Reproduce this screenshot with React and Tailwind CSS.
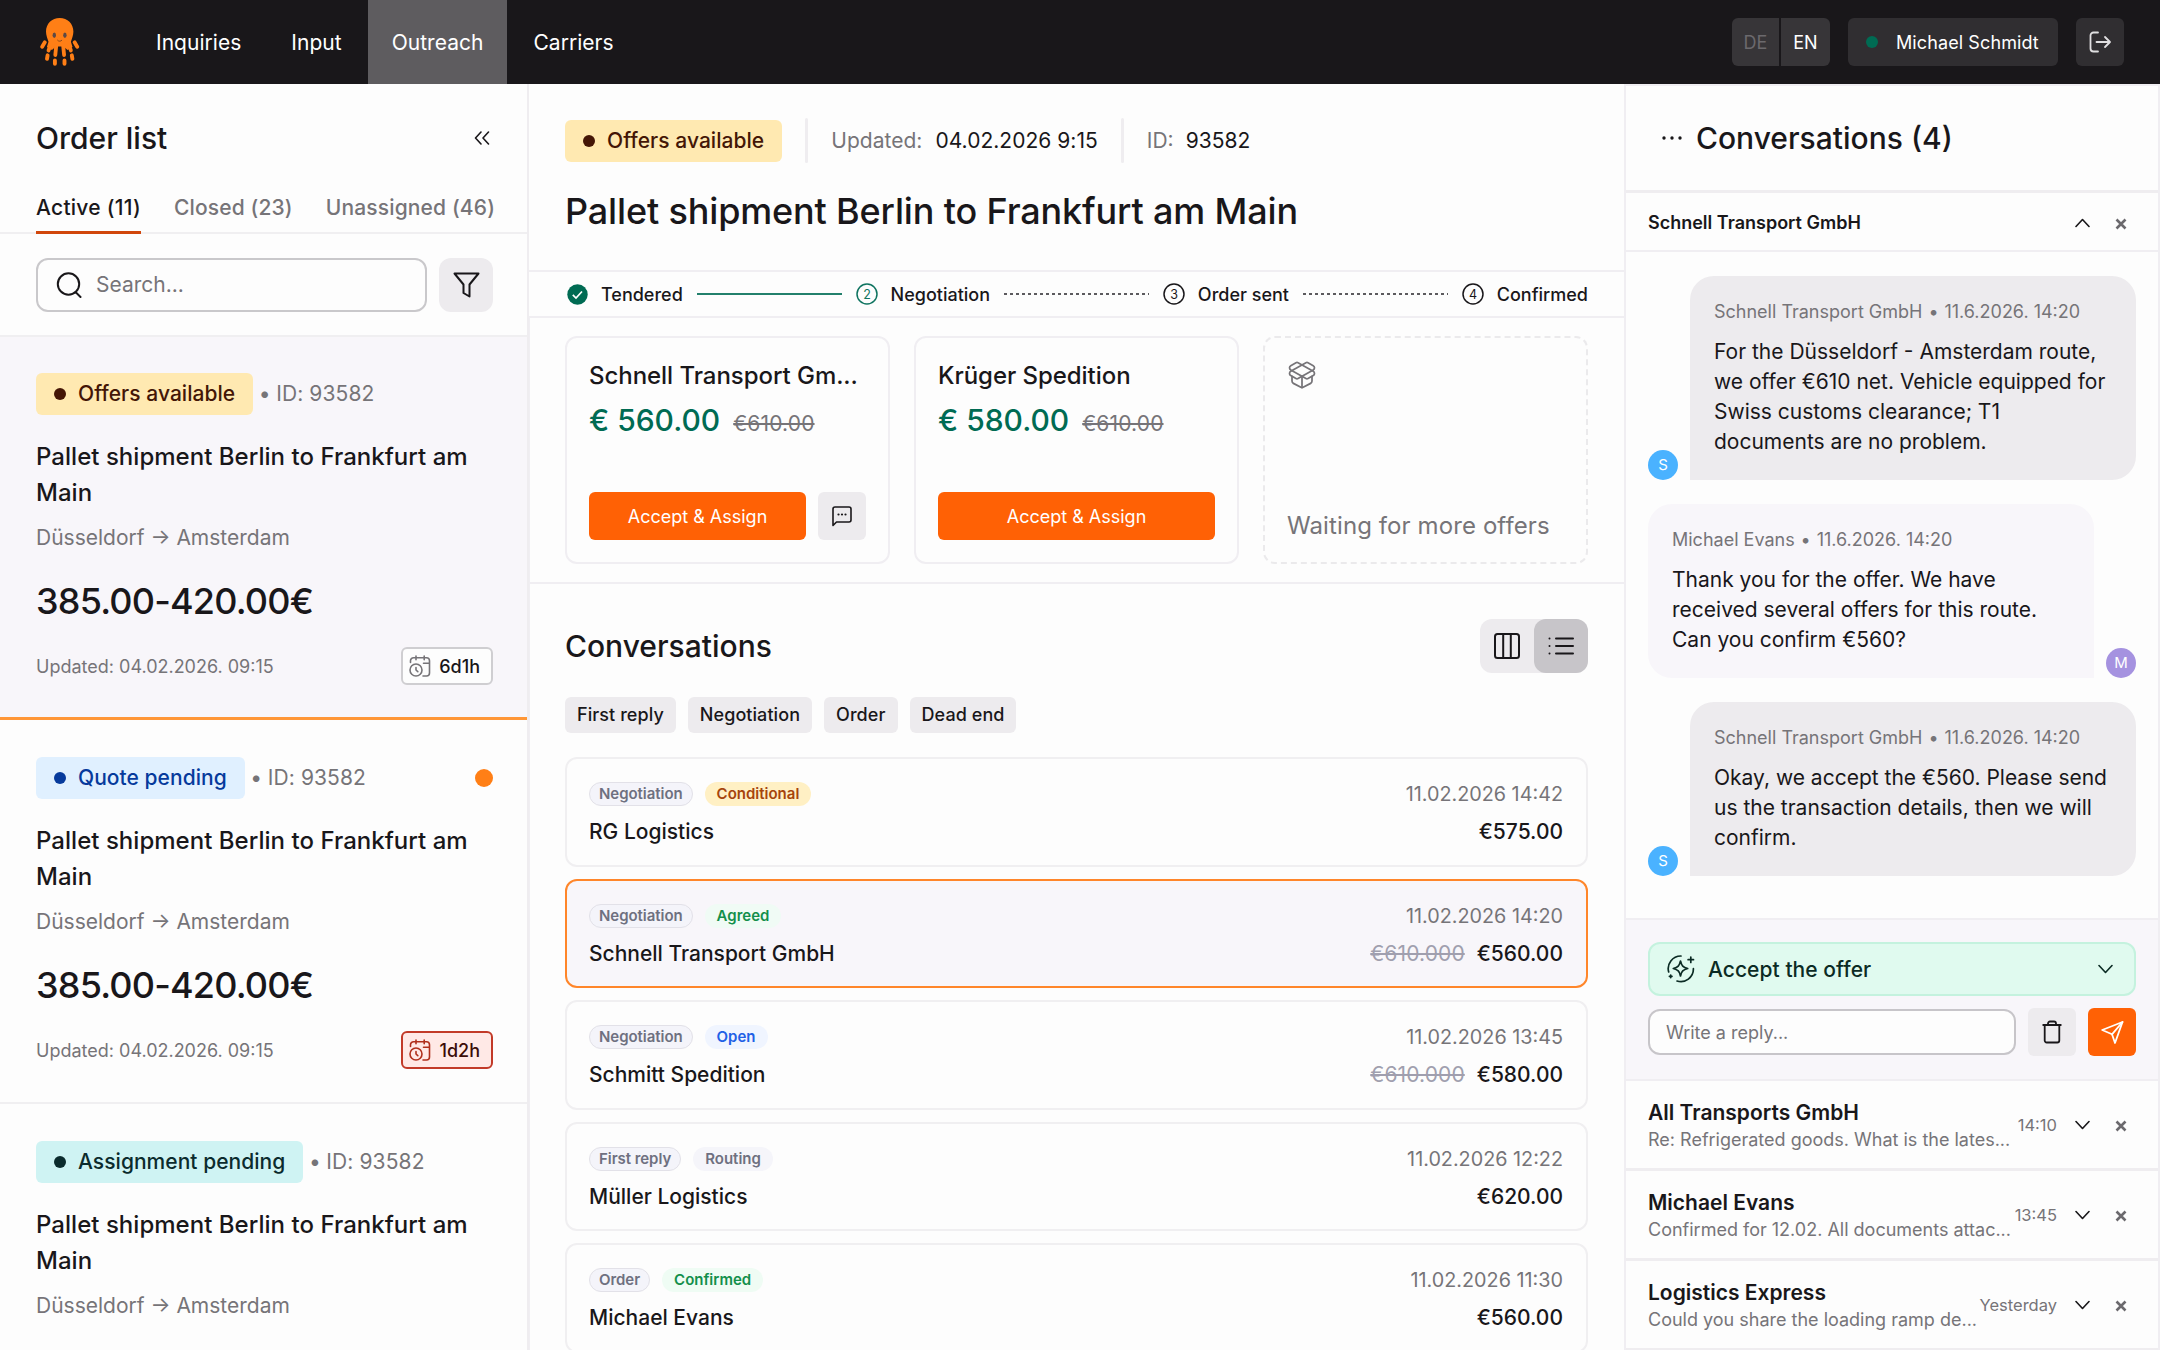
const NAV = ["Inquiries", "Input", "Outreach", "Carriers"];

const STATUS_COLORS = {
  offers:     "bg-[#ffe9b1] text-[#441606]",
  quote:      "bg-[#e0f0ff] text-[#063a9c]",
  assignment: "bg-[#cff3f3] text-[#0b2b2d]",
};

const DOT_COLORS = {
  offers:     "bg-[#441606]",
  quote:      "bg-[#063a9c]",
  assignment: "bg-[#0b2b2d]",
};

const ORDERS = [
  { id: 1, status: "offers", label: "Offers available", left: "6d1h", selected: true },
  { id: 2, status: "quote", label: "Quote pending", left: "1d2h", urgent: true, unread: true },
  { id: 3, status: "assignment", label: "Assignment pending", left: "1d2h" },
];

const TAG_COLORS = {
  Conditional: "bg-[#fff0c4] text-[#a6440c]",
  Agreed:      "bg-[#f0fbf5] text-[#138f4b]",
  Confirmed:   "bg-[#effcf4] text-[#138f4b]",
  Open:        "bg-[#f0f5ff] text-[#2160e6]",
  Routing:     "bg-[#f5f5fa] text-[#6e7080]",
};

const THREADS = [
  { id: 1, stage: "Negotiation", tag: "Conditional", name: "RG Logistics", date: "11.02.2026 14:42", price: "€575.00" },
  { id: 2, stage: "Negotiation", tag: "Agreed", name: "Schnell Transport GmbH", date: "11.02.2026 14:20", old: "€610.000", price: "€560.00", selected: true },
  { id: 3, stage: "Negotiation", tag: "Open", name: "Schmitt Spedition", date: "11.02.2026 13:45", old: "€610.000", price: "€580.00" },
  { id: 4, stage: "First reply", tag: "Routing", name: "Müller Logistics", date: "11.02.2026 12:22", price: "€620.00" },
  { id: 5, stage: "Order", tag: "Confirmed", name: "Michael Evans", date: "11.02.2026 11:30", price: "€560.00" },
];

const MESSAGES = [
  { id: 1, from: "Schnell Transport GmbH", text: "For the Düsseldorf - Amsterdam route, we offer €610 net. Vehicle equipped for Swiss customs clearance; T1 documents are no problem." },
  { id: 2, from: "Michael Evans", own: true, text: "Thank you for the offer. We have received several offers for this route. Can you confirm €560?" },
  { id: 3, from: "Schnell Transport GmbH", text: "Okay, we accept the €560. Please send us the transaction details, then we will confirm." },
];

const CLOSED_THREADS = [
  { name: "All Transports GmbH", preview: "Re: Refrigerated goods. What is the lates...", time: "14:10" },
  { name: "Michael Evans", preview: "Confirmed for 12.02. All documents attac...", time: "13:45" },
  { name: "Logistics Express", preview: "Could you share the loading ramp de...", time: "Yesterday" },
];

function Icon({ w, h, sw = 1.8, className = "", children }) {
  return (
    <svg width={w} height={h} viewBox={`0 0 ${w} ${h}`} fill="none" stroke="currentColor"
      strokeWidth={sw} strokeLinecap="round" strokeLinejoin="round" className={`shrink-0 ${className}`}>
      {children}
    </svg>
  );
}

function Logo() {
  return (
    <svg width="40" height="48" viewBox="0 0 40 48" fill="none" stroke="#ff7f16" strokeLinecap="round">
      <path d="M19.7 0C27.5 0 33.4 5.8 33.4 13.6c0 4-1.6 7.3-2.5 10.2l1.6 5.2-5 3-4-3.5h-7.6l-4 3.5-5-3 1.6-5.2C7.6 20.9 6 17.6 6 13.6 6 5.8 11.9 0 19.7 0z" fill="#ff7f16" stroke="none" />
      <path d="M4.8 24.3l-2.6 4.5M34.6 24.3l2.6 4.5" strokeWidth="3.8" />
      <path d="M10.5 27l-2 5.5M28.9 27l2 5.5M16.3 27l-1 10M23.1 27l1 10" strokeWidth="3.8" />
      <path d="M7.6 37.3l-.6 3.5M31.8 37.3l.6 3.5M14.9 42.5v3.3M24.5 42.5v3.3" strokeWidth="3.9" />
      <ellipse cx="14.3" cy="17.3" rx="1.7" ry="2.7" fill="#5d4a45" stroke="none" />
      <ellipse cx="24.9" cy="17.3" rx="1.7" ry="2.7" fill="#5d4a45" stroke="none" />
      <path d="M17.6 22.3c1 1.3 3.2 1.3 4.2 0" stroke="#8a4a1d" strokeWidth="1" />
    </svg>
  );
}

function Chevron({ up }) {
  return (
    <Icon w={15} h={10} sw={1.6}>
      <path d={up ? "M1 8.5l6.5-7 6.5 7" : "M1 1.5l6.5 7 6.5-7"} />
    </Icon>
  );
}

function Cross() {
  return (
    <Icon w={12} h={12} sw={2.6} className="mt-[3px] text-[#6b696d]">
      <path d="M1.5 1.5l9 9M10.5 1.5l-9 9" strokeLinecap="butt" />
    </Icon>
  );
}

function StatusBadge({ status, label }) {
  return (
    <div className={`flex h-[42px] items-center gap-3 rounded-md px-[18px] text-[21px] font-medium tracking-[0.04px] ${STATUS_COLORS[status]}`}>
      <span className={`size-3 rounded-full ${DOT_COLORS[status]}`} />
      {label}
    </div>
  );
}

function Header() {
  return (
    <header className="flex h-[84px] shrink-0 items-center bg-[#19171a] pr-9 text-white">
      <div className="ml-10 w-[92px]"><Logo /></div>
      <nav className="flex h-full gap-[2px] text-[21px]">
        {NAV.map(n => (
          <a key={n} className={`flex items-center px-6 pt-px tracking-[0.03px] ${n === "Outreach" ? "bg-[#5e5c5f]" : ""}`}>{n}</a>
        ))}
      </nav>
      <div className="ml-auto flex gap-[18px] text-[18px]">
        <div className="flex h-12 gap-[2px] overflow-hidden rounded-md">
          <span className="flex w-[47px] items-center justify-center bg-[#373538] text-[#6b696d]">DE</span>
          <span className="flex w-[49px] items-center justify-center bg-[#373538]">EN</span>
        </div>
        <div className="flex h-12 w-[210px] items-center gap-[18px] rounded-md bg-[#302e31] pl-[18px] tracking-[0.1px] whitespace-nowrap">
          <span className="size-3 rounded-full bg-[#006b53]" />
          Michael Schmidt
        </div>
        <button className="flex size-12 items-center justify-center rounded-md bg-[#302e31] text-[#e0dfe1]">
          <Icon w={24} h={24}>
            <path d="M10 2.5H5.500a3 3 0 0 0-3 3v13a3 3 0 0 0 3 3H10M8.500 12h13M17 7l5 5-5 5" />
          </Icon>
        </button>
      </div>
    </header>
  );
}

function OrderCard({ order }) {
  return (
    <div className={`flex shrink-0 flex-col pr-[34px] pl-9
      ${order.selected ? "h-[383px] border-b-[3px] border-[#ff9636] bg-[#f8f6fa] pt-9" : "h-96 border-b-2 border-[#f0eff1] pt-[37px]"}`}>
      <div className="flex items-center text-[21px]">
        <StatusBadge status={order.status} label={order.label} />
        <span className="w-[23px] text-center text-[#767478]">•</span>
        <span className="tracking-[0.1px] text-[#767478]">ID: 93582</span>
        {order.unread && <span className="ml-auto size-[18px] rounded-full bg-[#ff7f16]" />}
      </div>
      <p className="mt-6 text-[24px] leading-9 font-medium tracking-[0.03px]">Pallet shipment Berlin to Frankfurt am Main</p>
      <p className="mt-[11px] text-[21px] leading-[31px] text-[#767478]">Düsseldorf → Amsterdam</p>
      <p className="mt-[21px] text-[36px] leading-[54px] font-medium tracking-[-0.8px]">385.00-420.00€</p>
      <div className="mt-[19px] flex items-center justify-between">
        <span className="text-[18px] text-[#767478]">Updated: 04.02.2026. 09:15</span>
        <span className={`flex h-[38px] items-center gap-2 rounded-md border-2 pr-[11px] pl-[6px] text-[18px] font-medium
          ${order.urgent ? "border-[#c23a28] bg-[#ffe9e6] text-[#3b0d08]" : "border-[#cfced1] bg-[#fdfdfd]"}`}>
          <Icon w={22} h={22} sw={1.6} className={order.urgent ? "text-[#b0301c]" : "text-[#767478]"}>
            <path d="M1.5 7.5V5.7a3 3 0 0 1 3-3h13a3 3 0 0 1 3 3V18a3 3 0 0 1-3 3H14M7 1v3.7M15.2 1v3.7M14.5 8.3h6" />
            <circle cx="7" cy="15" r="6" />
            <path d="M7 12.5V15l1.8 1.6" />
          </Icon>
          {order.left}
        </span>
      </div>
    </div>
  );
}

function Sidebar() {
  return (
    <aside className="flex w-[529px] shrink-0 flex-col overflow-hidden border-r-2 border-[#efedf0]">
      <div className="flex h-[108px] shrink-0 items-center justify-between pr-[37px] pl-9">
        <h2 className="text-[30px] font-medium">Order list</h2>
        <Icon w={16} h={14} sw={1.6}><path d="M7 1L1.5 7 7 13M14.5 1L9 7l5.5 6" /></Icon>
      </div>
      <div className="flex h-[42px] shrink-0 gap-[33px] border-b-2 border-[#f0eff1] pl-9 text-[21px] leading-[31px] font-medium tracking-[0.15px] whitespace-nowrap text-[#767478]">
        <span className="h-[42px] border-b-[3px] border-[#d1470c] tracking-[0.27px] text-[#19171a]">Active (11)</span>
        <span>Closed (23)</span>
        <span>Unassigned (46)</span>
      </div>
      <div className="flex h-[103px] shrink-0 items-center gap-3 border-b-2 border-[#f0eff1] pt-px pr-[34px] pl-9">
        <div className="flex h-[54px] flex-1 items-center gap-[14px] rounded-xl border-2 border-[#c9c8cb] pl-[18px] text-[21px] text-[#767478]">
          <Icon w={26} h={26} sw={2} className="text-[#19171a]">
            <circle cx="12.5" cy="12" r="10.7" />
            <path d="M20 20.5l4.5 4.5" />
          </Icon>
          Search...
        </div>
        <button className="flex size-[54px] items-center justify-center rounded-xl bg-[#edebee]">
          <Icon w={27} h={26} sw={2}>
            <path d="M1.5 1.5h24L16.5 12.5v12l-6-3.5v-8.5z" />
          </Icon>
        </button>
      </div>
      {ORDERS.map(o => <OrderCard key={o.id} order={o} />)}
    </aside>
  );
}

function Step({ n, label, state }) {
  return (
    <>
      {state === "done" ? (
        <svg width="21" height="21" viewBox="0 0 21 21" className="ml-[2px] shrink-0">
          <circle cx="10.5" cy="10.5" r="10.2" fill="#006b53" />
          <path d="M5.8 10.8l3.2 3.2 6-6.5" fill="none" stroke="#fff" strokeWidth="1.7" />
        </svg>
      ) : (
        <svg width="22" height="22" viewBox="0 0 22 22" className={`shrink-0 ${state === "current" ? "text-[#0f7460]" : ""}`}>
          <circle cx="11" cy="11" r="10" fill="none" stroke="currentColor" strokeWidth="1.5" />
          <text x="11" y="15.5" fontSize="12.5" textAnchor="middle" fill="currentColor">{n}</text>
        </svg>
      )}
      <span className="-ml-px font-medium">{label}</span>
    </>
  );
}

function DashedLine() {
  return <span className="h-[2px] flex-1 bg-[repeating-linear-gradient(90deg,#5c5a5e_0_3px,transparent_3px_6px)]" />;
}

function OfferCard({ name, price, chat }) {
  return (
    <div className="flex h-[228px] flex-1 flex-col rounded-xl border-2 border-[#f0eef2] px-[22px] pb-[22px]">
      <p className="mt-5 text-[24px] leading-9 font-medium tracking-[-0.05px] whitespace-nowrap">{name}</p>
      <div className="mt-1 flex items-baseline gap-[13px]">
        <span className="text-[30px] leading-[45px] font-medium text-[#006b53]">{price}</span>
        <span className="text-[21px] tracking-[0.15px] text-[#767478] line-through">€610.00</span>
      </div>
      <div className="mt-auto flex gap-3">
        <button className="h-12 flex-1 rounded-md bg-[#ff6105] text-[18px] text-white">Accept &amp; Assign</button>
        {chat && (
          <button className="flex size-12 items-center justify-center rounded-md bg-[#edebee]">
            <Icon w={20} h={21} sw={1.6}>
              <path d="M1 19.5V3a2 2 0 0 1 2-2h14a2 2 0 0 1 2 2v11a2 2 0 0 1-2 2H4.5z" />
              <path d="M6.5 8.5h.01M10 8.5h.01M13.5 8.5h.01" strokeWidth="2.2" />
            </Icon>
          </button>
        )}
      </div>
    </div>
  );
}

function ThreadRow({ thread }) {
  return (
    <div className={`flex h-[109.5px] shrink-0 justify-between rounded-xl border-2 pt-[23px] pr-[23px] pl-[22px]
      ${thread.selected ? "border-[#ff862a] bg-[#f8f6fa]" : "border-[#f0eff1]"}`}>
      <div>
        <div className="flex gap-3 text-[15px] leading-6 font-semibold">
          <span className="h-6 rounded-full border border-[#e2e1e8] bg-[#f4f4fa] px-[9px] leading-[22px] tracking-[-0.05px] text-[#6e7080]">{thread.stage}</span>
          <span className={`h-6 rounded-full px-3 ${TAG_COLORS[thread.tag]}`}>{thread.tag}</span>
        </div>
        <p className="mt-3 text-[21px] leading-[27px] font-medium">{thread.name}</p>
      </div>
      <div className="text-right">
        <p className="text-[19.8px] leading-6 text-[#767478]">{thread.date}</p>
        <p className="mt-3 text-[21px] leading-[27px] font-medium">
          {thread.old && <span className="mr-3 font-normal tracking-[0.12px] text-[#a09fae] line-through">{thread.old}</span>}
          {thread.price}
        </p>
      </div>
    </div>
  );
}

function Main() {
  return (
    <main className="flex min-w-0 flex-1 flex-col overflow-hidden">
      <div className="h-[188px] shrink-0 border-b-2 border-[#f0eef2] px-9 pt-[34px]">
        <div className="flex items-center gap-[23px] text-[21px]">
          <StatusBadge status="offers" label="Offers available" />
          <span className="h-[45px] w-[3px] rounded bg-[#efedf0]" />
          <span className="flex gap-[13px] pt-px tracking-[0.03px]"><span className="text-[#767478]">Updated:</span>04.02.2026 9:15</span>
          <span className="h-[45px] w-[3px] rounded bg-[#efedf0]" />
          <span className="flex gap-3 pt-px"><span className="text-[#767478]">ID:</span>93582</span>
        </div>
        <h1 className="mt-[21px] text-[36px] leading-[54px] font-medium tracking-[-0.15px]">Pallet shipment Berlin to Frankfurt am Main</h1>
      </div>

      <div className="flex h-[46px] shrink-0 items-center gap-[14px] border-b-2 border-[#f0eef2] px-9 text-[18px]">
        <Step label="Tendered" state="done" />
        <span className="h-[2px] flex-1 bg-[#23806c]" />
        <Step n={2} label="Negotiation" state="current" />
        <DashedLine />
        <Step n={3} label="Order sent" />
        <DashedLine />
        <Step n={4} label="Confirmed" />
      </div>

      <div className="flex h-[266px] shrink-0 gap-6 border-b-2 border-l border-[#f0eef2] pt-[18px] pr-9 pl-[35px]">
        <OfferCard name="Schnell Transport Gm..." price="€ 560.00" chat />
        <OfferCard name="Krüger Spedition" price="€ 580.00" />
        <div className="flex h-[228px] flex-1 flex-col justify-between rounded-xl border-2 border-dashed border-[#ebeaec] px-[22px] pt-[22px] pb-[18px] text-[#767478]">
          <svg width="30" height="30" viewBox="0 0 24 24" fill="none" stroke="currentColor" strokeWidth="1.4" strokeLinecap="round" strokeLinejoin="round">
            <path d="M12 22v-9" />
            <path d="M15.17 2.21a1.67 1.67 0 0 1 1.63 0L21 4.57a1.93 1.93 0 0 1 0 3.36L8.82 14.79a1.655 1.655 0 0 1-1.64 0L3 12.43a1.93 1.93 0 0 1 0-3.36z" />
            <path d="M20 13v3.87a2.06 2.06 0 0 1-1.11 1.83l-6 3.08a1.93 1.93 0 0 1-1.78 0l-6-3.08A2.06 2.06 0 0 1 4 16.87V13" />
            <path d="M21 12.43a1.93 1.93 0 0 0 0-3.36L8.83 2.2a1.64 1.64 0 0 0-1.63 0L3 4.57a1.93 1.93 0 0 0 0 3.36l12.18 6.86a1.636 1.636 0 0 0 1.63 0z" />
          </svg>
          <span className="text-[24px] leading-9 tracking-[0.1px]">Waiting for more offers</span>
        </div>
      </div>

      <div className="flex flex-1 flex-col border-l border-[#f0eef2] pt-[35px] pr-9 pl-[35px]">
        <div className="flex items-center justify-between">
          <h2 className="text-[30px] font-medium">Conversations</h2>
          <div className="flex h-[54px] w-[108px] rounded-xl bg-[#edebee]">
            <span className="flex size-[54px] items-center justify-center">
              <Icon w={26} h={26} sw={2}>
                <rect x="1" y="1" width="24" height="24" rx="2.5" />
                <path d="M9.2 1v24M16.8 1v24" />
              </Icon>
            </span>
            <span className="flex size-[54px] items-center justify-center rounded-xl bg-[#c7c5c9]">
              <Icon w={26} h={18} sw={2}>
                <path d="M8 1.5h17M8 9h17M8 16.5h17M1.5 1.5h.01M1.5 9h.01M1.5 16.5h.01" />
              </Icon>
            </span>
          </div>
        </div>
        <div className="mt-6 flex gap-3 text-[18px] font-medium">
          {["First reply", "Negotiation", "Order", "Dead end"].map(f => (
            <span key={f} className="h-9 rounded-md bg-[#edebee] px-3 leading-9 tracking-[0.07px]">{f}</span>
          ))}
        </div>
        <div className="mt-6 flex h-[593px] flex-col gap-3 overflow-hidden">
          {THREADS.map(t => <ThreadRow key={t.id} thread={t} />)}
        </div>
      </div>
    </main>
  );
}

function Message({ msg }) {
  const avatar = (
    <span className={`flex size-[30px] shrink-0 items-center justify-center rounded-full text-[15px] text-white
      ${msg.own ? "bg-[#a592e0]" : "bg-[#4ab2ff]"}`}>{msg.from[0]}</span>
  );
  return (
    <div className="flex items-end gap-3">
      {!msg.own && avatar}
      <div className={`w-[446px] rounded-3xl px-6 pt-6 pb-[23px] ${msg.own ? "rounded-br-none bg-[#f8f6fa]" : "rounded-bl-none bg-[#edebee]"}`}>
        <p className="flex text-[18px] leading-6 text-[#767478]">
          {msg.from}<span className="w-[22px] text-center">•</span>11.6.2026. 14:20
        </p>
        <p className="mt-[13px] text-[21px] leading-[30px]">{msg.text}</p>
      </div>
      {msg.own && avatar}
    </div>
  );
}

function ConversationPanel() {
  return (
    <aside className="flex w-[536px] shrink-0 flex-col overflow-hidden border-x-2 border-t-2 border-[#f0eef2]">
      <div className="flex h-[107px] shrink-0 items-center gap-3 border-b-[3px] border-[#efedf0] pl-[34px]">
        <Icon w={24} h={6} sw={3.4}><path d="M4 3h.01M12 3h.01M20 3h.01" /></Icon>
        <h2 className="text-[30px] font-medium">Conversations (4)</h2>
      </div>
      <div className="flex h-[59px] shrink-0 items-center justify-between border-b-2 border-[#f0eef2] pt-[2px] pr-[31px] pl-[22px]">
        <span className="text-[18px] font-semibold">Schnell Transport GmbH</span>
        <span className="flex items-center gap-[25px]"><Chevron up /><Cross /></span>
      </div>
      <div className="flex h-[666px] shrink-0 flex-col gap-6 pt-6 pl-[22px]">
        {MESSAGES.map(m => <Message key={m.id} msg={m} />)}
      </div>

      <div className="h-[163px] shrink-0 border-y-2 border-[#f0eef2] bg-[#f8f6fa] px-[22px] pt-[22px]">
        <div className="flex h-[54px] items-center rounded-xl border-2 border-[#c4f2de] bg-[#e0faef] pr-[21px] pl-[17px] text-[21px] font-medium text-[#0b2b24]">
          <Icon w={28} h={28} sw={1.7}>
            <path d="M14 1A12.6 12.6 0 0 0 1.7 17M26.4 13.7A12.6 12.6 0 0 1 10 26" />
            <path d="M13.5 6c1 4.7 2.6 6.3 7.2 7.5-4.6 1.2-6.2 2.8-7.2 7.5-1-4.7-2.6-6.3-7.2-7.5 4.6-1.2 6.2-2.8 7.2-7.5z" />
            <path d="M23.8 2v5.4M21.1 4.7h5.4M3.7 20v2.6M2.4 21.3H5" />
          </Icon>
          <span className="ml-[13px] flex-1 pt-px tracking-[0.05px]">Accept the offer</span>
          <Chevron />
        </div>
        <div className="mt-3 flex items-center gap-3">
          <div className="flex h-[46px] flex-1 items-center rounded-xl border-2 border-[#c7c5c9] bg-[#fdfdfd] pl-4 text-[18px] text-[#767478]">Write a reply...</div>
          <button className="flex size-12 items-center justify-center rounded-md bg-[#edebee]">
            <Icon w={20} h={24}>
              <path d="M1.2 5h17.6M6 5V3.5a2 2 0 0 1 2-2h4a2 2 0 0 1 2 2V5M2.7 5v15.5a2 2 0 0 0 2 2h10.6a2 2 0 0 0 2-2V5" />
            </Icon>
          </button>
          <button className="flex size-12 items-center justify-center rounded-md bg-[#ff6105] text-white">
            <Icon w={23} h={23}>
              <path d="M21.5 1L1.2 9l9.800 4.300L14 22z" />
              <path d="M21.5 1L11 13.300" />
            </Icon>
          </button>
        </div>
      </div>

      {CLOSED_THREADS.map(c => (
        <div key={c.name} className="flex h-[90px] shrink-0 items-center border-b-[3px] border-[#efedf0] pr-[31px] pl-[22px]">
          <div className="min-w-0 flex-1 pt-[3px] whitespace-nowrap">
            <p className="text-[21px] leading-[27px] font-semibold">{c.name}</p>
            <p className="text-[18px] leading-[27px] text-[#767478]">{c.preview}</p>
          </div>
          <span className="pt-[2px] text-[16.5px] text-[#767478]">{c.time}</span>
          <span className="ml-[18px] flex items-center gap-[25px]"><Chevron /><Cross /></span>
        </div>
      ))}
    </aside>
  );
}

export default function App() {
  return (
    <div className="flex h-[1350px] w-[2160px] flex-col overflow-hidden bg-[#fdfdfd] font-[Inter,sans-serif] text-[#19171a]">
      <Header />
      <div className="flex min-h-0 flex-1">
        <Sidebar />
        <Main />
        <ConversationPanel />
      </div>
    </div>
  );
}
